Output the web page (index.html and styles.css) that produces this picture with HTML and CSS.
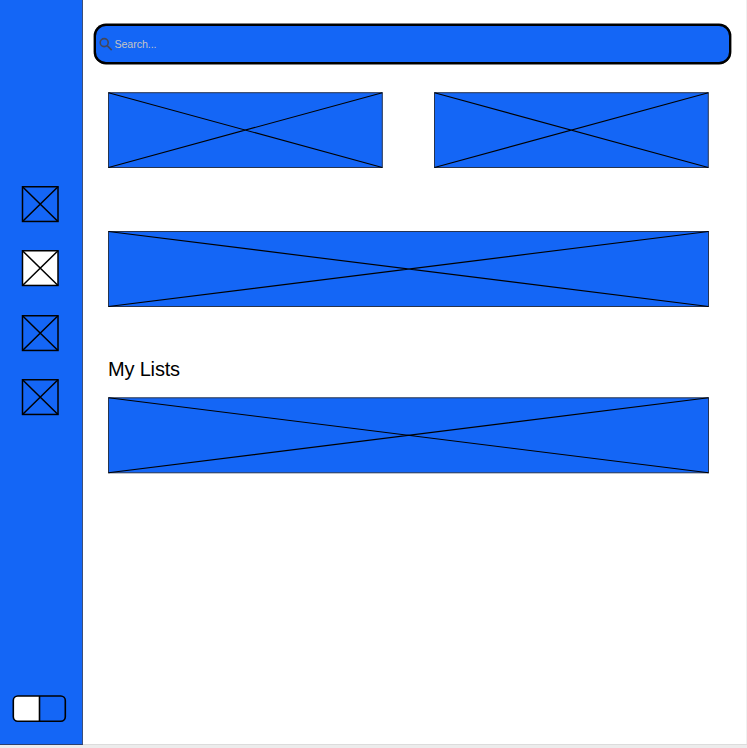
FILE: index.html
```
<!DOCTYPE html>
<html lang="en">
<head>
<meta charset="utf-8">
<title>My Lists</title>
<link rel="stylesheet" href="styles.css">
</head>
<body>
<div class="app">
  <aside class="sidebar">
    <nav class="nav">
      <svg class="nav-icon" viewBox="0 0 37 37"><rect x=".5" y=".75" width="35.5" height="34.700"/><path d="M.5.75l35.500 34.700M36 .75l-35.500 34.700"/></svg>
      <svg class="nav-icon active" viewBox="0 0 37 37"><rect x=".5" y=".75" width="35.5" height="34.700"/><path d="M.5.75l35.500 34.700M36 .75l-35.500 34.700"/></svg>
      <svg class="nav-icon" viewBox="0 0 37 37"><rect x=".5" y=".75" width="35.5" height="34.700"/><path d="M.5.75l35.500 34.700M36 .75l-35.500 34.700"/></svg>
      <svg class="nav-icon" viewBox="0 0 37 37"><rect x=".5" y=".75" width="35.5" height="34.700"/><path d="M.5.75l35.500 34.700M36 .75l-35.500 34.700"/></svg>
    </nav>
    <svg class="toggle" viewBox="0 0 54 27">
      <path class="toggle-on" d="M27.500 1H5.500Q1.300 1 1.300 5.500V21.500Q1.300 26 5.500 26H27.500z"/>
      <rect x="1.300" y="1" width="52" height="25.300" rx="4.500"/>
      <path d="M27.500 1v25.300"/>
    </svg>
  </aside>
  <main class="content">
    <div class="search">
      <svg class="search-icon" viewBox="0 0 14 14"><circle cx="5.200" cy="5.600" r="4"/><path d="M8.200 8.600l4.500 4.500"/></svg>
      <span>Search...</span>
    </div>
    <div class="row">
      <svg class="panel half" viewBox="0 0 275 76"><rect x=".5" y=".7" width="273.800" height="74.800"/><path d="M.5.7l273.800 74.800M274.300.7l-273.800 74.800"/></svg>
      <svg class="panel half" viewBox="0 0 275 76"><rect x=".5" y=".7" width="273.800" height="74.800"/><path d="M.5.7l273.800 74.800M274.300.7l-273.800 74.800"/></svg>
    </div>
    <svg class="panel banner" viewBox="0 0 601 76"><rect x=".5" y=".5" width="600" height="75"/><path d="M.5.5l600 75M600.500.5l-600 75"/></svg>
    <h1 class="title">My Lists</h1>
    <svg class="panel" viewBox="0 0 601 76"><rect x=".5" y=".8" width="600" height="75"/><path d="M.5.8l600 75M600.500.8l-600 75"/></svg>
  </main>
</div>
</body>
</html>
```
FILE: styles.css
```
* { box-sizing: border-box; }
body {
  margin: 0;
  height: 748px;
  overflow: hidden;
  background: #ececec;
  font-family: "Liberation Sans", Arial, sans-serif;
}
svg { display: block; overflow: visible; flex: none; }
.app {
  display: flex;
  height: 744px;
  width: 747px;
  background: #fff;
  border-right: 1px solid #f0f0f0;
  box-shadow: 0 1px 0 #dcdcdc;
}
.sidebar {
  display: flex;
  flex-direction: column;
  justify-content: space-between;
  width: 83px;
  height: 745px;
  flex: none;
  padding: 186px 0 22px;
  background: #1466f6;
  border-right: 1px solid #3c4f78;
  border-bottom: 1px solid #2a3f6e;
}
.nav { display: flex; flex-direction: column; gap: 27.5px; padding-left: 22px; }
.nav-icon { width: 37px; height: 37px; fill: none; stroke: #000; stroke-width: 1.5; }
.nav-icon:nth-child(even) { margin-top: -.5px; margin-bottom: .5px; }
.active rect { fill: #fff; }
.toggle { width: 54px; height: 27px; margin-left: 12px; fill: none; stroke: #000; stroke-width: 1.6; }
.toggle .toggle-on { fill: #fff; stroke: none; }
.content { flex: 1; padding: 24px 0 0 25px; }
.search {
  display: flex;
  align-items: center;
  gap: 2px;
  width: 637px;
  height: 40px;
  margin-left: -14px;
  padding: 0 0 0 3px;
  background: #1466f6;
  border: 2px solid #000;
  border-radius: 12px;
  box-shadow: 0 0 0 .4px #000;
  color: #c4c4c4;
  font-size: 10.7px;
  letter-spacing: -.1px;
}
.search span { margin-left: -.5px; }
.search-icon { width: 14px; height: 14px; fill: none; stroke: #43475a; stroke-width: 1.6; }
.row { display: flex; gap: 51px; margin: 28px 0 63px; }
.panel { width: 601px; height: 76px; fill: #1466f6; stroke: #000; stroke-width: 1.15; }
.panel rect { stroke: #26344f; stroke-width: 1; }
.half { width: 275px; }
.title {
  margin: 49px 0 15px;
  font-size: 20px;
  line-height: 26px;
  font-weight: 400;
  letter-spacing: -.18px;
  color: #000;
}
```
